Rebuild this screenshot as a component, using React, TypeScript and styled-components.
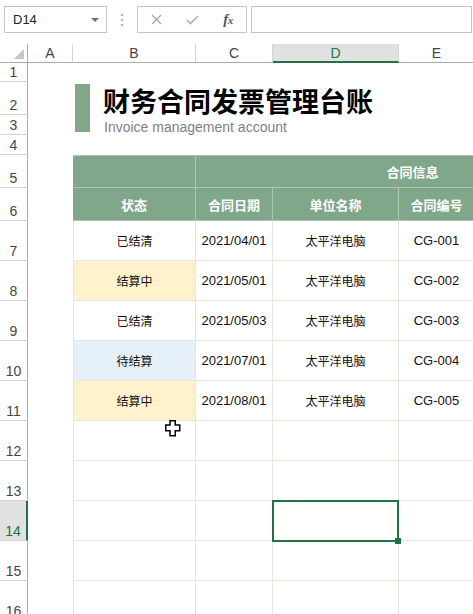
import React from "react";
import styled, { createGlobalStyle, css } from "styled-components";

const GlobalStyle = createGlobalStyle`
  html, body { margin: 0; padding: 0; background: #ffffff; }
  body {
    font-family: "Liberation Sans", "Noto Sans CJK SC", sans-serif;
    overflow: hidden;
  }
  * { box-sizing: border-box; }
`;

const GRID = "#e3eadc";
const HEAD = "#80a78a";
const HEAD_LINE = "#abc6b1";
const EXCEL = "#217346";

const Page = styled.div`
  width: 473px;
  height: 614px;
  overflow: hidden;
  position: relative;
  background: #fff;
`;

/* ---------- formula bar ---------- */
const Toolbar = styled.div`
  height: 44px;
  display: flex;
  align-items: flex-start;
  padding: 6px 1px 0 4px;
`;

const NameBox = styled.div`
  width: 103px;
  height: 27px;
  border: 1px solid #c6c6c6;
  display: flex;
  align-items: center;
  justify-content: space-between;
  padding: 0 7px 0 8px;
  font-size: 13px;
  color: #222;
`;

const Caret = styled.span`
  width: 0;
  height: 0;
  border-left: 4px solid transparent;
  border-right: 4px solid transparent;
  border-top: 4px solid #6f6f6f;
`;

const Grip = styled.div`
  width: 30px;
  height: 27px;
  display: flex;
  flex-direction: column;
  align-items: center;
  justify-content: center;
  gap: 3px;
`;

const GripDot = styled.span`
  width: 2px;
  height: 2px;
  background: #b4b4b4;
`;

const FxBox = styled.div`
  width: 110px;
  height: 27px;
  border: 1px solid #c6c6c6;
  display: flex;
  align-items: center;
`;

const FxSlot = styled.div`
  width: 36px;
  height: 100%;
  display: flex;
  align-items: center;
  justify-content: center;
`;

const FxLabel = styled.span`
  font-family: "Liberation Serif", serif;
  font-style: italic;
  font-weight: 700;
  font-size: 15px;
  color: #555;
  letter-spacing: -0.5px;
  small { font-size: 11px; }
`;

const FormulaInput = styled.div`
  flex: 1;
  height: 27px;
  margin-left: 4px;
  border: 1px solid #c6c6c6;
`;

/* ---------- sheet ---------- */
const Sheet = styled.div`
  display: grid;
  width: 630px;
  grid-template-columns: 28px 45px 123px 77px 126px 76px 155px;
  grid-template-rows: 19px 19px 33px 20px 20px 33px 33px repeat(10, 40px);
`;

type Place = { $row: number; $col: number; $span?: number; $rows?: number };

const place = css<Place>`
  grid-row: ${(p) => p.$row} / span ${(p) => p.$rows ?? 1};
  grid-column: ${(p) => p.$col} / span ${(p) => p.$span ?? 1};
`;

const Corner = styled.div<Place>`
  ${place};
  position: relative;
  border-right: 1px solid #ababab;
  border-bottom: 1px solid #ababab;
  &::after {
    content: "";
    position: absolute;
    right: 3px;
    bottom: 3px;
    width: 0;
    height: 0;
    border-left: 10px solid transparent;
    border-bottom: 10px solid #c6c6c6;
  }
`;

const ColHeader = styled.div<Place & { $selected?: boolean }>`
  ${place};
  display: flex;
  align-items: center;
  justify-content: center;
  font-size: 14px;
  color: #444;
  border-right: 1px solid #d4d4d4;
  border-bottom: 1px solid #ababab;
  ${(p) =>
    p.$selected &&
    css`
      background: #e1e1e1;
      color: ${EXCEL};
      border-bottom: 2px solid ${EXCEL};
    `}
`;

const RowHeader = styled.div<Place & { $selected?: boolean }>`
  ${place};
  display: flex;
  align-items: flex-end;
  justify-content: center;
  font-size: 14px;
  line-height: 16px;
  padding-bottom: 1px;
  color: #444;
  border-bottom: 1px solid #d5d5d5;
  border-right: 1px solid #ababab;
  ${(p) =>
    p.$selected &&
    css`
      background: #e1e1e1;
      color: ${EXCEL};
      border-right: 2px solid ${EXCEL};
    `}
`;

const TitleBlock = styled.div<Place>`
  ${place};
  display: flex;
  align-items: flex-start;
  gap: 13px;
  padding: 2px 0 0 2px;
`;

const TitleBar = styled.div`
  width: 15px;
  height: 48px;
  flex: none;
  background: ${HEAD};
`;

const TitleText = styled.div`
  display: flex;
  flex-direction: column;
  padding-top: 2px;
  white-space: nowrap;
`;

const Title = styled.div`
  font-family: "Noto Sans CJK SC", sans-serif;
  font-weight: 700;
  font-size: 27px;
  line-height: 30px;
  color: #000;
`;

const Subtitle = styled.div`
  font-family: "Liberation Sans", sans-serif;
  font-size: 14px;
  line-height: 18px;
  margin-top: 2px;
  margin-left: 1px;
  color: #808080;
`;

const HeadCell = styled.div<Place & { $top?: boolean }>`
  ${place};
  display: flex;
  align-items: center;
  justify-content: center;
  background: ${HEAD};
  color: #fff;
  font-family: "Noto Sans CJK SC", sans-serif;
  font-weight: 700;
  font-size: 13px;
  border-right: 1px solid ${HEAD_LINE};
  border-bottom: 1px solid ${HEAD_LINE};
  ${(p) => p.$top && css`border-top: 1px solid ${HEAD_LINE};`}
`;

type Tone = "plain" | "pending" | "waiting";
const toneBg: Record<Tone, string> = {
  plain: "#ffffff",
  pending: "#fff2cc",
  waiting: "#e6f0f8",
};

const Cell = styled.div<
  Place & { $tone?: Tone; $cjk?: boolean; $edge?: boolean; $active?: boolean }
>`
  ${place};
  position: relative;
  display: flex;
  align-items: center;
  justify-content: center;
  background: ${(p) => toneBg[p.$tone ?? "plain"]};
  font-size: ${(p) => (p.$cjk ? "12px" : "13px")};
  color: #111;
  border-right: 1px solid ${GRID};
  border-bottom: 1px solid ${GRID};
  ${(p) => p.$edge && css`border-left: 1px solid ${GRID};`}
  ${(p) => p.$active && css`z-index: 2;`}
`;

const Selection = styled.div`
  position: absolute;
  top: -1px;
  left: -1px;
  right: -1px;
  bottom: -2px;
  border: 2px solid ${EXCEL};
  pointer-events: none;
`;

const FillHandle = styled.span`
  position: absolute;
  right: -4px;
  bottom: -4px;
  width: 6px;
  height: 6px;
  background: ${EXCEL};
`;

const Pointer = styled.svg`
  position: absolute;
  left: 165px;
  top: 420px;
  z-index: 3;
`;

type Rec = { status: string; tone: Tone; date: string; unit: string; code: string };
const records: Rec[] = [
  { status: "已结清", tone: "plain", date: "2021/04/01", unit: "太平洋电脑", code: "CG-001" },
  { status: "结算中", tone: "pending", date: "2021/05/01", unit: "太平洋电脑", code: "CG-002" },
  { status: "已结清", tone: "plain", date: "2021/05/03", unit: "太平洋电脑", code: "CG-003" },
  { status: "待结算", tone: "waiting", date: "2021/07/01", unit: "太平洋电脑", code: "CG-004" },
  { status: "结算中", tone: "pending", date: "2021/08/01", unit: "太平洋电脑", code: "CG-005" },
];

const columns = ["A", "B", "C", "D", "E", "F"];

export default function App() {
  const rowNums = Array.from({ length: 16 }, (_, i) => i + 1);
  const emptyRows = [12, 13, 14, 15, 16];

  return (
    <Page>
      <GlobalStyle />
      <Toolbar>
        <NameBox>
          <span>D14</span>
          <Caret />
        </NameBox>
        <Grip>
          <GripDot />
          <GripDot />
          <GripDot />
        </Grip>
        <FxBox>
          <FxSlot>
            <svg width="11" height="11" viewBox="0 0 11 11">
              <path d="M1 1 L10 10 M10 1 L1 10" stroke="#a8a8a8" strokeWidth="1.3" fill="none" />
            </svg>
          </FxSlot>
          <FxSlot>
            <svg width="13" height="10" viewBox="0 0 13 10">
              <path d="M1 5 L4.5 8.5 L12 1" stroke="#b0b0b0" strokeWidth="1.6" fill="none" />
            </svg>
          </FxSlot>
          <FxSlot>
            <FxLabel>
              f<small>x</small>
            </FxLabel>
          </FxSlot>
        </FxBox>
        <FormulaInput />
      </Toolbar>

      <Sheet>
        <Corner $row={1} $col={1} />
        {columns.map((c, i) => (
          <ColHeader key={c} $row={1} $col={i + 2} $selected={c === "D"}>
            {c}
          </ColHeader>
        ))}

        {rowNums.map((n) => (
          <RowHeader key={n} $row={n + 1} $col={1} $selected={n === 14}>
            {n}
          </RowHeader>
        ))}

        <TitleBlock $row={3} $rows={2} $col={3} $span={5}>
          <TitleBar />
          <TitleText>
            <Title>财务合同发票管理台账</Title>
            <Subtitle>Invoice management account</Subtitle>
          </TitleText>
        </TitleBlock>

        <HeadCell $row={6} $col={3} $top />
        <HeadCell $row={6} $col={4} $span={4} $top>
          合同信息
        </HeadCell>

        <HeadCell $row={7} $col={3}>状态</HeadCell>
        <HeadCell $row={7} $col={4}>合同日期</HeadCell>
        <HeadCell $row={7} $col={5}>单位名称</HeadCell>
        <HeadCell $row={7} $col={6}>合同编号</HeadCell>
        <HeadCell $row={7} $col={7} />

        {records.map((r, i) => {
          const row = i + 8;
          return (
            <React.Fragment key={r.code}>
              <Cell $row={row} $col={3} $tone={r.tone} $cjk $edge>
                {r.status}
              </Cell>
              <Cell $row={row} $col={4}>{r.date}</Cell>
              <Cell $row={row} $col={5} $cjk>
                {r.unit}
              </Cell>
              <Cell $row={row} $col={6}>{r.code}</Cell>
              <Cell $row={row} $col={7} />
            </React.Fragment>
          );
        })}

        {emptyRows.map((n) => (
          <React.Fragment key={n}>
            <Cell $row={n + 1} $col={3} $edge />
            <Cell $row={n + 1} $col={4} />
            <Cell $row={n + 1} $col={5} $active={n === 14}>
              {n === 14 && (
                <Selection>
                  <FillHandle />
                </Selection>
              )}
            </Cell>
            <Cell $row={n + 1} $col={6} />
            <Cell $row={n + 1} $col={7} />
          </React.Fragment>
        ))}
      </Sheet>

      <Pointer width="16" height="17" viewBox="0 0 16 17">
        <path
          d="M5 0.75 H10.25 V5 H14.75 V10.75 H10.25 V15.75 H5 V10.75 H0.75 V5 H5 Z"
          fill="#fff"
          stroke="#000"
          strokeWidth="1.5"
          strokeLinejoin="miter"
        />
      </Pointer>
    </Page>
  );
}
